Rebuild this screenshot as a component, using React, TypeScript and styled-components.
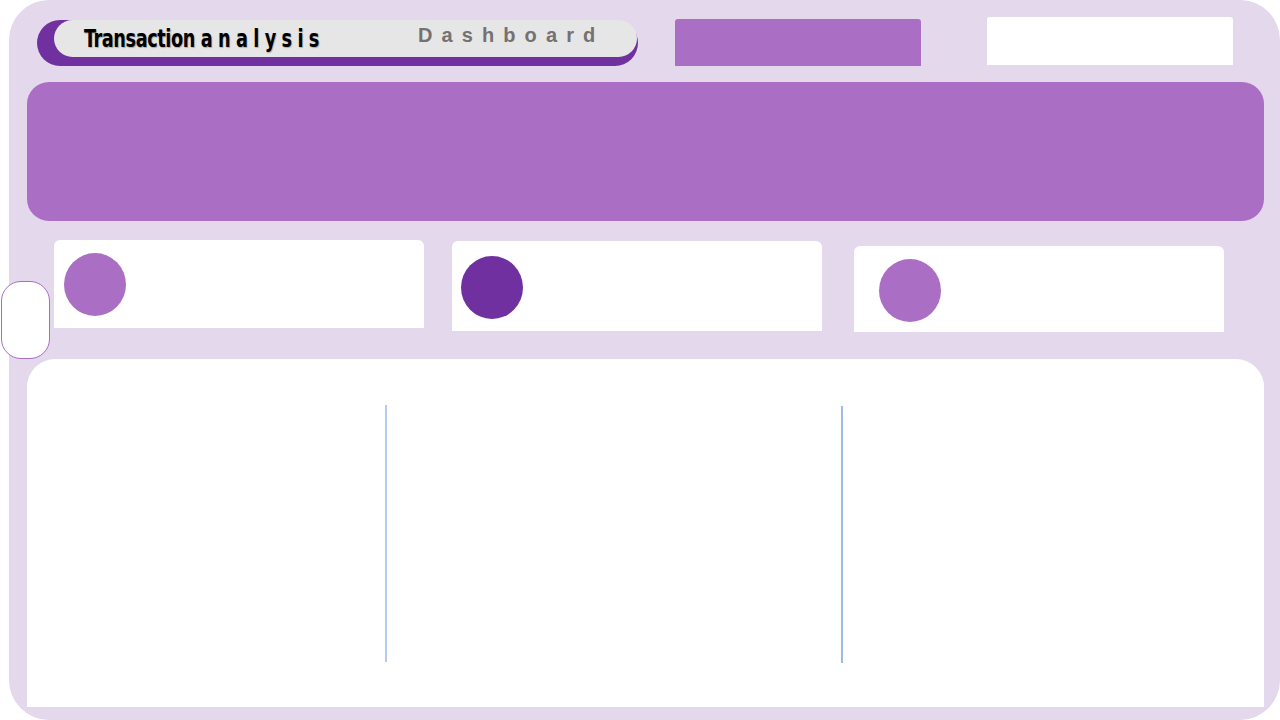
import { createGlobalStyle, styled } from "styled-components"

const GlobalStyle = createGlobalStyle`
    html, body {
        margin: 0;
        padding: 0;
        background: #ffffff;
        font-family: "Liberation Sans", Arial, sans-serif;
    }
`
const Panel = styled.div`
    position: relative;
    box-sizing: border-box;
    margin-left: 9px;
    width: 1271px;
    height: 720px;
    border-radius: 40px;
    background: #e3d8ec;
    padding: 0 16px 13px 18px;
    display: flex;
    flex-direction: column;
`
const Header = styled.div`
    height: 82px;
    display: flex;
    align-items: flex-start;
`
const TitlePill = styled.div`
    margin: 20px 0 0 10px;
    width: 601px;
    height: 46px;
    border-radius: 23px;
    background: #7030a0;
    display: flex;
    justify-content: flex-end;
`
const TitleInner = styled.div`
    box-sizing: border-box;
    width: 583px;
    height: 37px;
    margin-right: 1px;
    border-radius: 19px;
    background: #e7e6e6;
    display: flex;
    align-items: center;
    padding-left: 30px;
`
const Title = styled.span`
    display: inline-block;
    width: 334px;
    font-family: "DejaVu Sans Condensed", "DejaVu Sans", sans-serif;
    font-weight: bold;
    font-size: 24px;
    letter-spacing: -0.5px;
    color: #000000;
    text-shadow: 1px 1px 1px rgba(0, 0, 0, 0.25);
    white-space: pre;
    transform: scaleX(0.82);
    transform-origin: left center;
`
const Subtitle = styled.span`
    font-family: "Liberation Sans", Arial, sans-serif;
    font-weight: bold;
    font-size: 20px;
    letter-spacing: 9.1px;
    color: #767171;
    margin-top: -6px;
`
const Block = styled.div<{ $top: number; $left: number; $h: number; $bg: string }>`
    margin: ${(p) => p.$top}px 0 0 ${(p) => p.$left}px;
    width: 246px;
    height: ${(p) => p.$h}px;
    border-radius: 3px 3px 0 0;
    background: ${(p) => p.$bg};
`
const Banner = styled.div`
    height: 139px;
    border-radius: 22px;
    background: #aa6ec4;
`
const CardRow = styled.div`
    height: 138px;
    display: flex;
    align-items: flex-start;
    padding-left: 27px;
`
const Card = styled.div<{ $top: number; $h: number; $gap: number }>`
    box-sizing: border-box;
    margin: ${(p) => p.$top}px 0 0 ${(p) => p.$gap}px;
    width: 370px;
    height: ${(p) => p.$h}px;
    border-radius: 6px 6px 0 0;
    background: #ffffff;
`
const Dot = styled.div<{ $x: number; $y: number; $dark?: boolean }>`
    margin: ${(p) => p.$y}px 0 0 ${(p) => p.$x}px;
    width: 62px;
    height: 63px;
    border-radius: 50%;
    background: ${(p) => (p.$dark ? "#7030a0" : "#aa6ec4")};
`
const Board = styled.div`
    flex: 1;
    border-radius: 28px 28px 0 0;
    background: #ffffff;
    display: flex;
    padding-top: 46px;
`
const Column = styled.div<{ $w: number }>`
    width: ${(p) => p.$w}px;
`
const Divider = styled.div<{ $color: string; $top: number }>`
    width: 2px;
    height: 257px;
    margin-top: ${(p) => p.$top}px;
    background: ${(p) => p.$color};
`
const SideTab = styled.div`
    position: absolute;
    left: -8px;
    top: 281px;
    box-sizing: border-box;
    width: 49px;
    height: 78px;
    border-radius: 20px;
    border: 1px solid #a86ec4;
    background: #ffffff;
`

export default function App() {
    return (
        <>
            <GlobalStyle />
            <Panel>
                <Header>
                    <TitlePill>
                        <TitleInner>
                            <Title>Transaction a n a l y s i s</Title>
                            <Subtitle>Dashboard</Subtitle>
                        </TitleInner>
                    </TitlePill>
                    <Block $top={19} $left={37} $h={47} $bg="#aa6ec4" />
                    <Block $top={17} $left={66} $h={48} $bg="#ffffff" />
                </Header>
                <Banner />
                <CardRow>
                    <Card $top={19} $h={88} $gap={0}>
                        <Dot $x={10} $y={13} />
                    </Card>
                    <Card $top={20} $h={90} $gap={28}>
                        <Dot $x={9} $y={15} $dark />
                    </Card>
                    <Card $top={25} $h={86} $gap={32}>
                        <Dot $x={25} $y={13} />
                    </Card>
                </CardRow>
                <Board>
                    <Column $w={358} />
                    <Divider $color="#b3cbee" $top={0} />
                    <Column $w={454} />
                    <Divider $color="#9dbbe3" $top={1} />
                </Board>
                <SideTab />
            </Panel>
        </>
    )
}
